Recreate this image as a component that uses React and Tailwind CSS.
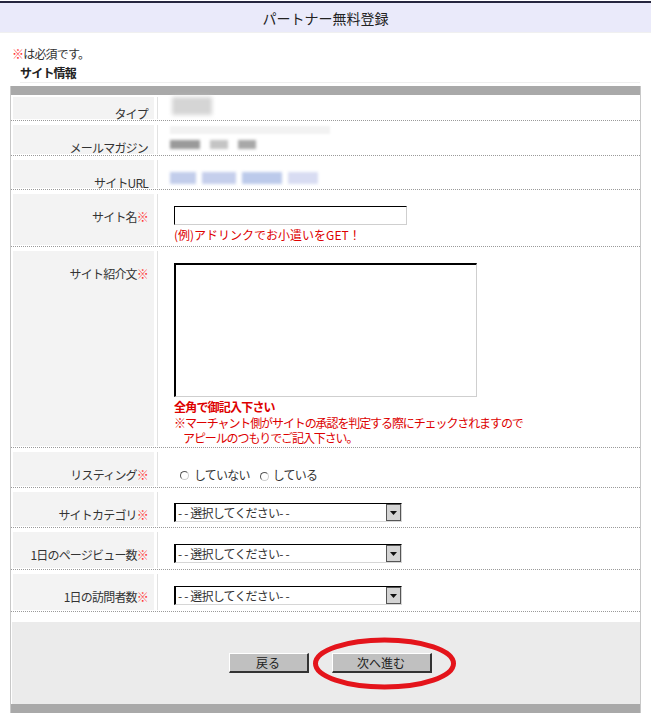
import React from "react";

const Req = () => <span className="text-[#ff3333]">※</span>;

const Row = ({ label, req, h, first, children, valueTop }) => {
  return (
    <div className={`flex border-b border-dotted border-[#9a9a9a] ${h}`}>
      <div
        className={`w-[141px] ml-[2px] mb-[1px] bg-[#f3f3f3] text-right pr-[6px] ${
          first ? "mt-[2px] pt-[9px]" : "mt-[4px] pt-[15px]"
        }`}
      >
        {label}
        {req && <Req />}
      </div>
      <div className="w-[3px]" />
      <div className={`w-px bg-[#e2e2e2] mb-[1px] ${first ? "mt-[2px]" : "mt-[4px]"}`} />
      <div className={`flex-1 pl-[16px] ${valueTop || "pt-[16px]"}`}>{children}</div>
    </div>
  );
};

const Select = () => (
  <div className="flex w-[228px] h-[19px] bg-white border-t border-l-2 border-t-black border-l-black border-b border-r border-b-[#d6d6d6] border-r-[#d6d6d6]">
    <div className="flex-1 pl-[2px] leading-[17px]">
      <span className="tracking-[2px]">--</span>選択してください<span className="tracking-[2px]">--</span>
    </div>
    <div className="w-[15px] h-[17px] bg-[#d4d4d4] border border-[#555] flex items-center justify-center">
      <svg width="7" height="4" viewBox="0 0 7 4">
        <path d="M0 0h7L3.5 4z" fill="#111" />
      </svg>
    </div>
  </div>
);

const Radio = () => (
  <span className="inline-block w-[9px] h-[9px] rounded-full bg-white border border-t-[#555] border-l-[#555] border-b-[#ccc] border-r-[#ccc] align-[-1px]" />
);

const App = () => {
  return (
    <div className="relative w-[651px] min-h-[726px] bg-white text-[12px] leading-[16px] text-[#333] tracking-[-0.8px] font-['Noto_Sans_CJK_JP','Noto_Sans',sans-serif]">
      <div className="h-[1px] bg-white" />
      <div className="h-[2px] bg-[#26263e]" />
      <div className="h-[30px] bg-[#eaeafa] border-b border-[#f0f0f0] flex items-center justify-center text-[14px] tracking-[0px] text-[#222]">
        パートナー無料登録
      </div>

      <div className="px-[12px] mt-[13px]">
        <Req />は必須です。
      </div>
      <div className="ml-[20px] mr-[11px] mt-[3px] pb-[1px] border-b border-[#eeeeee] font-bold text-[#222]">
        サイト情報
      </div>

      <div className="mx-[10px] mt-[3px] border-l border-r border-[#c8c8c8]">
        <div className="h-[9px] bg-[#a9a9a9]" />

        <Row label="タイプ" h="h-[26px]" first valueTop="pt-[2px]">
          <div className="ml-[-2px] w-[40px] h-[18px] bg-[#d5d5d5] blur-[2px]" />
        </Row>

        <Row label="メールマガジン" h="h-[35px]" valueTop="pt-[5px]">
          <div className="ml-[-4px] w-[160px] h-[8px] bg-[#f2f2f2] blur-[1px]" />
          <div className="ml-[-4px] mt-[6px] flex gap-[10px]">
            <div className="w-[30px] h-[9px] bg-[#9a9a9a] blur-[1.5px]" />
            <div className="w-[18px] h-[9px] bg-[#c4c4c4] blur-[1.5px]" />
            <div className="w-[18px] h-[9px] bg-[#a8a8a8] blur-[1.5px]" />
          </div>
        </Row>

        <Row label="サイトURL" h="h-[34px]" valueTop="pt-[16px]">
          <div className="ml-[-4px] flex gap-[6px]">
            <div className="w-[26px] h-[12px] bg-[#c2cdeb] blur-[1.5px]" />
            <div className="w-[34px] h-[12px] bg-[#c5cfec] blur-[1.5px]" />
            <div className="w-[40px] h-[12px] bg-[#bccaeb] blur-[1.5px]" />
            <div className="w-[30px] h-[12px] bg-[#d8dcf2] blur-[1.5px]" />
          </div>
        </Row>

        <Row label="サイト名" req h="h-[57px]">
          <div className="w-[233px] h-[19px] bg-white border-t border-l border-t-black border-l-black border-b border-r border-b-[#cfcfcf] border-r-[#cfcfcf]" />
          <div className="mt-[2px] text-[#dd0000] tracking-[0px]">(例)アドリンクでお小遣いをGET！</div>
        </Row>

        <Row label="サイト紹介文" req h="h-[201px]">
          <div className="w-[303px] h-[134px] bg-white border-t-2 border-l-2 border-t-black border-l-black border-b border-r border-b-[#cfcfcf] border-r-[#cfcfcf]" />
          <div className="mt-[2px] font-bold text-[#dd0000]">全角で御記入下さい</div>
          <div className="text-[#dd0000] leading-[15px] tracking-[-1.1px]">
            ※マーチャント側がサイトの承認を判定する際にチェックされますので
            <br />
            <span className="pl-[9px]">アピールのつもりでご記入下さい。</span>
          </div>
        </Row>

        <Row label="リスティング" req h="h-[40px]" valueTop="pt-[19px]">
          <div className="pl-[6px] flex items-center">
            <Radio />
            <span className="ml-[5px]">していない</span>
            <span className="ml-[10px]">
              <Radio />
            </span>
            <span className="ml-[4px]">している</span>
          </div>
        </Row>

        <Row label="サイトカテゴリ" req h="h-[40px]" valueTop="pt-[15px]">
          <Select />
        </Row>

        <Row label="1日のページビュー数" req h="h-[42px]" valueTop="pt-[16px]">
          <Select />
        </Row>

        <Row label="1日の訪問者数" req h="h-[42px]" valueTop="pt-[16px]">
          <Select />
        </Row>

        <div className="h-[10px] bg-white" />
        <div className="h-[82px] ml-[1px] bg-[#ebebeb] flex justify-center items-start pt-[31px] pl-[8px] gap-[23px] tracking-[0px]">
          <button className="w-[80px] h-[20px] bg-[#c0c0c0] border-t border-l border-t-white border-l-white border-b-2 border-r-2 border-b-[#333] border-r-[#333] text-[12px] leading-[16px] text-[#222]">
            戻る
          </button>
          <button className="w-[100px] h-[20px] bg-[#c0c0c0] border-t border-l border-t-white border-l-white border-b-2 border-r-2 border-b-[#333] border-r-[#333] text-[12px] leading-[16px] text-[#222]">
            次へ進む
          </button>
        </div>
        <div className="h-[9px] bg-[#a9a9a9]" />
      </div>

      <svg
        className="absolute left-[308px] top-[634px]"
        width="154"
        height="60"
        viewBox="0 0 154 60"
      >
        <ellipse cx="76.5" cy="29.5" rx="69" ry="23.5" fill="none" stroke="#e4141b" strokeWidth="5" />
      </svg>
    </div>
  );
};

export default App;
